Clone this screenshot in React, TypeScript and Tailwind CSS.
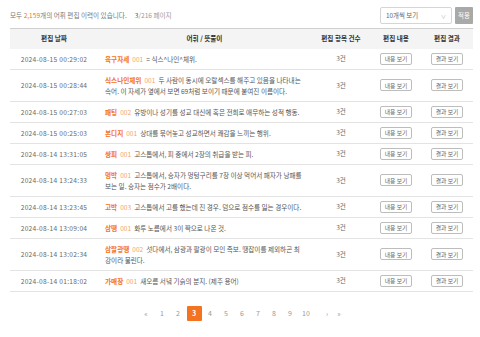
import React from "react";

type Row = { date: string; word: string; num: string; def: string };

const rows: Row[] = [
  { date: "2024-08-15 00:29:02", word: "육구자세", num: "001", def: "= 식스^나인^체위." },
  { date: "2024-08-15 00:28:44", word: "식스나인체위", num: "001", def: "두 사람이 동시에 오랄섹스를 해주고 있음을 나타내는 속어. 이 자세가 옆에서 보면 69처럼 보이기 때문에 붙여진 이름이다." },
  { date: "2024-08-15 00:27:03", word: "패팅", num: "002", def: "유방이나 성기를 성교 대신에 혹은 전희로 애무하는 성적 행동." },
  { date: "2024-08-15 00:25:03", word: "본디지", num: "001", def: "상대를 묶어놓고 성교하면서 쾌감을 느끼는 행위." },
  { date: "2024-08-14 13:31:05", word: "쌍피", num: "001", def: "고스톱에서, 피 중에서 2장의 취급을 받는 피." },
  { date: "2024-08-14 13:24:33", word: "멍박", num: "001", def: "고스톱에서, 승자가 멍텅구리를 7장 이상 먹어서 패자가 낭패를 보는 일. 승자는 점수가 2배이다." },
  { date: "2024-08-14 13:23:45", word: "고박", num: "003", def: "고스톱에서 고를 했는데 진 경우. 덤으로 점수를 잃는 경우이다." },
  { date: "2024-08-14 13:09:04", word: "삼땡", num: "001", def: "화투 노름에서 3이 짝으로 나온 것." },
  { date: "2024-08-14 13:02:34", word: "삼팔광땡", num: "002", def: "섯다에서, 삼광과 팔광이 모인 족보. 땡잡이를 제외하곤 최강이라 불린다." },
  { date: "2024-08-14 01:18:02", word: "가매장", num: "001", def: "새오름 서녘 기슭의 분지. (제주 용어)" },
];

const font = { fontFamily: '"Noto Sans CJK KR", "Noto Sans", sans-serif' };

export default function App() {
  return (
    <div className="w-[480px] h-[337px] bg-white pl-[10px] pr-[7px] pt-[7px]" style={font}>
      <div className="flex items-center h-[17px]">
        <div className="text-[6.6px] text-[#777] flex-1">
          모두 <span className="text-[#f37321]">2,159</span>개의 어휘 편집 이력이 있습니다.
          <span className="ml-[8px] text-[#555]">3</span>
          <span className="text-[#999]">/216 페이지</span>
        </div>
        <div className="w-[72px] h-[17px] border border-[#d5d5d5] rounded-[2px] flex items-center justify-between px-[5px] text-[6.4px] text-[#666]">
          <span>10개씩 보기</span>
          <span className="text-[#aaa] text-[5px]">∨</span>
        </div>
        <div className="ml-[3px] w-[18px] h-[17px] bg-[#a9a9a9] rounded-[1px] text-white text-[6.4px] flex items-center justify-center">
          적용
        </div>
      </div>

      <table className="mt-[4px] w-[463px] border-collapse table-fixed text-[6.6px]">
        <colgroup>
          <col className="w-[88px]" />
          <col className="w-[213px]" />
          <col className="w-[60px]" />
          <col className="w-[50px]" />
          <col className="w-[52px]" />
        </colgroup>
        <thead>
          <tr className="bg-[#f4f4f4] border-t border-[#cfcfcf] h-[20px] text-[#333] font-bold">
            <th className="font-bold">편집 날짜</th>
            <th className="font-bold">어휘 / 뜻풀이</th>
            <th className="font-bold">편집 항목 건수</th>
            <th className="font-bold">편집 내용</th>
            <th className="font-bold">편집 결과</th>
          </tr>
        </thead>
        <tbody>
          {rows.map((r, i) => (
            <tr key={i} className="border-b border-[#e3e3e3] leading-[11px]">
              <td className="text-center text-[#666] tracking-[0.3px] pt-[5px] pb-[4px]">{r.date}</td>
              <td className="pl-[7px] pr-[9px] pt-[5px] pb-[4px] text-[#555]">
                <span className="text-[#f37321] font-bold">{r.word}</span>
                <span className="text-[#f5a46b] ml-[3px] mr-[3px]">{r.num}</span>
                {r.def}
              </td>
              <td className="text-center text-[#666]">3건</td>
              <td className="text-center">
                <span className="inline-flex items-center justify-center w-[32px] h-[12px] border border-[#bdbdbd] rounded-[2px] text-[#666] text-[5.8px] align-middle">
                  내용 보기
                </span>
              </td>
              <td className="text-center">
                <span className="inline-flex items-center justify-center w-[32px] h-[12px] border border-[#bdbdbd] rounded-[2px] text-[#666] text-[5.8px] align-middle">
                  결과 보기
                </span>
              </td>
            </tr>
          ))}
        </tbody>
      </table>

      <div className="mt-[14px] flex justify-center items-center text-[7px] text-[#999] h-[15px]">
        <span className="w-[16px] text-center">«</span>
        {[1, 2, 3, 4, 5, 6, 7, 8, 9, 10].map((n) =>
          n === 3 ? (
            <span key={n} className="w-[15px] h-[15px] mx-[0.5px] bg-[#f37321] text-white font-bold flex items-center justify-center rounded-[1px]">
              3
            </span>
          ) : (
            <span key={n} className="w-[16px] text-center">
              {n}
            </span>
          )
        )}
        <span className="w-[12px] ml-[7px] text-center">›</span>
        <span className="w-[12px] text-center">»</span>
      </div>
    </div>
  );
}
